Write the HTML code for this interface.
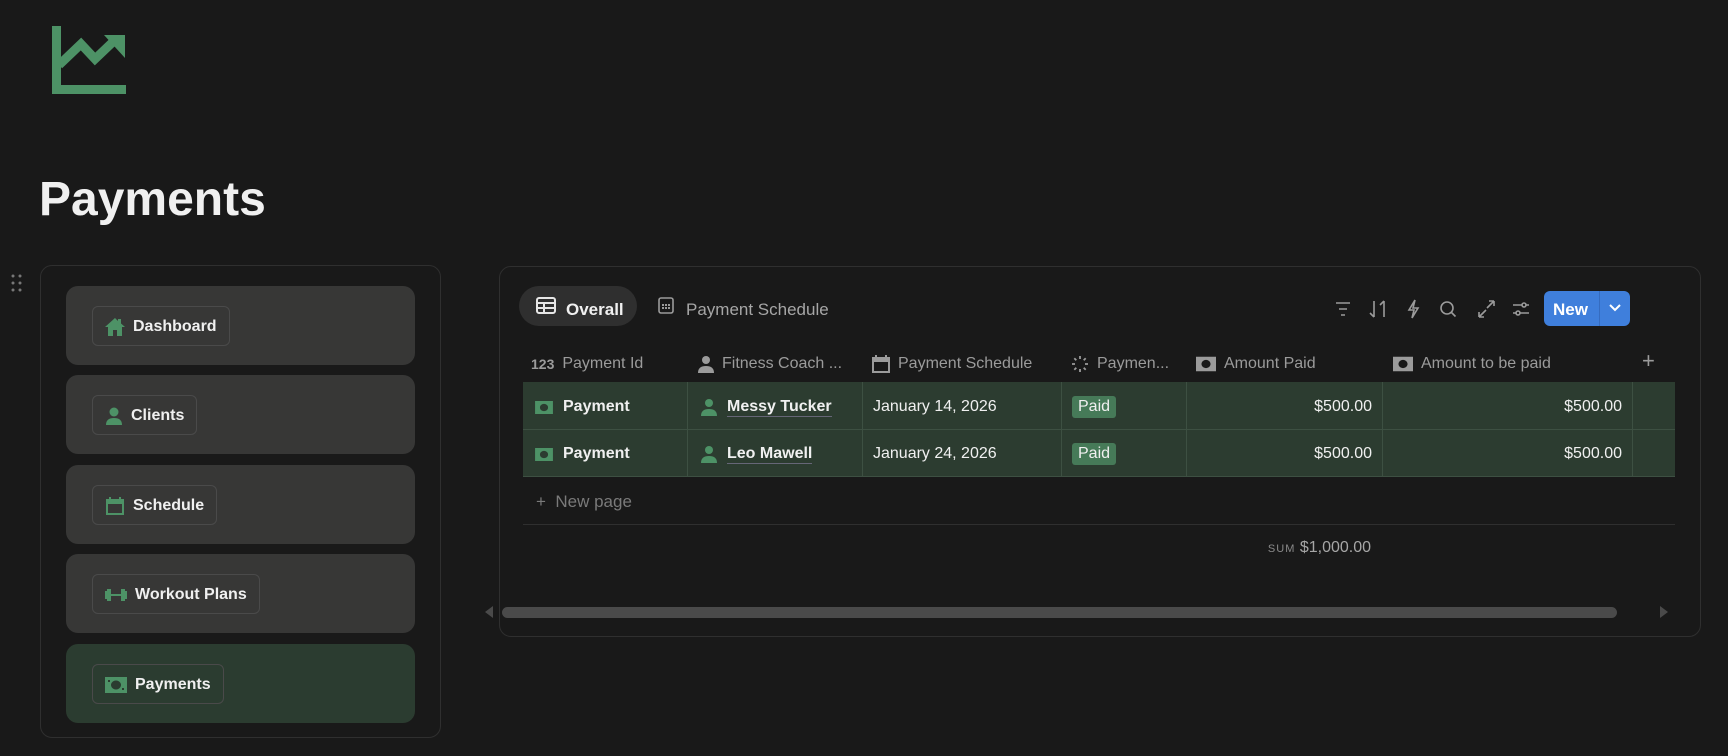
<!DOCTYPE html>
<html><head><meta charset="utf-8"><style>
*{box-sizing:border-box;margin:0;padding:0}
body{width:1728px;height:756px;background:#191919;font-family:"Liberation Sans",sans-serif;color:#d4d4d4;position:relative;overflow:hidden}
.abs{position:absolute}
.card{position:absolute;left:66px;width:349px;height:79px;background:#373736;border-radius:12px}
.pill{position:absolute;left:26px;top:20px;height:40px;border:1px solid #4a4a4a;border-radius:6px;display:flex;align-items:center;padding:2px 12px 0 12px;font-weight:bold;font-size:16px;color:#f0f0f0;gap:8px}
.hd{position:absolute;top:351px;height:26px;display:flex;align-items:center;gap:8px;font-size:16px;color:#9b9b9b}
.cell{position:absolute;height:47px;padding-top:3px;display:flex;align-items:center;font-size:16px;color:#f0f0f0}
.vl{position:absolute;top:382px;height:95px;width:1px;background:#3d5042}
.tag{background:#467a58;color:#f0f0f0;border-radius:3px;padding:2px 6px;font-size:16px}
</style></head><body>
<svg class="abs" style="left:52px;top:26px" width="74" height="68" viewBox="0 0 74 68"><g fill="#4d9266"><rect x="0" y="0" width="9" height="68"/><rect x="0" y="59" width="74" height="9"/><polygon points="52,9 73,9 73,32"/></g><path d="M7 39L29 18L43 33L64 13" stroke="#4d9266" stroke-width="9" fill="none"/></svg>
<div class="abs" style="left:39px;top:172px;font-size:48px;font-weight:bold;color:#f0f0f0">Payments</div>
<svg class="abs" style="left:11px;top:274px" width="12" height="20"><g fill="#777"><circle cx="2" cy="2" r="1.5"/><circle cx="9" cy="2" r="1.5"/><circle cx="2" cy="9" r="1.5"/><circle cx="9" cy="9" r="1.5"/><circle cx="2" cy="16" r="1.5"/><circle cx="9" cy="16" r="1.5"/></g></svg>
<div class="abs" style="left:40px;top:265px;width:401px;height:473px;border:1px solid #2f2f2f;border-radius:12px"></div>
<div class="card" style="top:286px"><div class="pill"><svg width="20" height="18" viewBox="0 0 20 18"><path fill="#4d9266" d="M10 0L0 9h3v9h5v-6h4v6h5V9h3L16 5.5V1h-3v2z"/></svg>Dashboard</div></div>
<div class="card" style="top:375px"><div class="pill"><svg width="18" height="18" viewBox="0 0 18 18"><g fill="#4d9266"><circle cx="9" cy="5" r="4.5"/><path d="M1 18c0-5 3-7 8-7s8 2 8 7z"/></g></svg>Clients</div></div>
<div class="card" style="top:465px"><div class="pill"><svg width="20" height="18" viewBox="0 0 20 18"><path fill="#4d9266" d="M4 0h2v2h8V0h2v2h3v16H1V2h3zM3 7v9h14V7z"/></svg>Schedule</div></div>
<div class="card" style="top:554px"><div class="pill"><svg width="22" height="14" viewBox="0 0 22 14"><path fill="#4d9266" d="M0 3h2V1h4v5h10V1h4v2h2v8h-2v2h-4V8H6v5H2v-2H0z"/></svg>Workout Plans</div></div>
<div class="card" style="top:644px;background:#2b3c30"><div class="pill"><svg width="22" height="16" viewBox="0 0 22 16"><path fill="#4d9266" fill-rule="evenodd" d="M0 0h22v16H0zM11 3.5a5 4.5 0 1 0 .01 0zM3 3v2h2V3zm14 8v2h2v-2z"/></svg>Payments</div></div>

<div class="abs" style="left:499px;top:266px;width:1202px;height:371px;border:1px solid #2f2f2f;border-radius:12px"></div>
<div class="abs" style="left:519px;top:286px;width:118px;height:40px;background:#2f2f2f;border-radius:20px"></div>
<svg class="abs" style="left:536px;top:297px" width="20" height="17" viewBox="0 0 20 17"><rect x="1" y="1" width="18" height="15" rx="2" fill="none" stroke="#e6e6e6" stroke-width="2"/><path d="M1 6h18M1 11h18M8 6v10" stroke="#e6e6e6" stroke-width="2"/></svg>
<div class="abs" style="left:566px;top:300px;font-size:17px;font-weight:bold;color:#f0f0f0">Overall</div>
<svg class="abs" style="left:658px;top:297px" width="16" height="17" viewBox="0 0 16 17"><rect x="1" y="1" width="14" height="15" rx="2" fill="none" stroke="#9b9b9b" stroke-width="1.6"/><g fill="#9b9b9b"><rect x="4" y="7" width="2" height="2"/><rect x="7" y="7" width="2" height="2"/><rect x="10" y="7" width="2" height="2"/><rect x="4" y="10" width="2" height="2"/><rect x="7" y="10" width="2" height="2"/><rect x="10" y="10" width="2" height="2"/></g></svg>
<div class="abs" style="left:686px;top:300px;font-size:17px;color:#a6a6a6">Payment Schedule</div>
<svg class="abs" style="left:1333px;top:298px" width="200" height="22" viewBox="0 0 200 22" fill="none" stroke="#9b9b9b" stroke-width="1.6">
<path d="M3 5h14M6 11h8M8 17h4"/>
<path d="M41 3v16M37 15l4 4M51 19V3M47 7l4-4"/>
<path d="M82 2l-6 10h5l-2 8 6-10h-5z"/>
<circle cx="114" cy="10" r="6"/><path d="M118.5 14.5l4 4"/>
<path d="M146 19l7-7M146 19v-5M146 19h5M161 3l-7 7M161 3v5M161 3h-5"/>
<path d="M180 7h16M180 15h16"/><circle cx="191" cy="7" r="2" fill="#191919"/><circle cx="185" cy="15" r="2" fill="#191919"/>
</svg>
<div class="abs" style="left:1544px;top:291px;width:86px;height:35px;background:#3f7fdc;border-radius:6px"></div>
<div class="abs" style="left:1599px;top:291px;width:1px;height:35px;background:#356cc0"></div>
<div class="abs" style="left:1553px;top:300px;font-size:17px;font-weight:bold;color:#fff">New</div>
<svg class="abs" style="left:1608px;top:303px" width="14" height="10"><path d="M2 2l5 5 5-5" stroke="#fff" stroke-width="2" fill="none"/></svg>

<div class="hd" style="left:531px"><span style="font-weight:bold;font-size:14px;color:#9b9b9b">123</span>Payment Id</div>
<div class="hd" style="left:698px"><svg width="16" height="18" viewBox="0 0 16 18"><g fill="#9b9b9b"><circle cx="8" cy="5" r="4"/><path d="M0 18c0-5 3-7 8-7s8 2 8 7z"/></g></svg>Fitness Coach ...</div>
<div class="hd" style="left:872px"><svg width="18" height="18" viewBox="0 0 18 18"><path fill="#9b9b9b" d="M3 0h2v2h8V0h2v2h3v16H0V2h3zM2 7v9h14V7z"/></svg>Payment Schedule</div>
<div class="hd" style="left:1071px"><svg width="18" height="18" viewBox="0 0 18 18" stroke="#9b9b9b" stroke-width="1.8"><path d="M9 1v3M9 14v3M1 9h3M14 9h3M3.3 3.3l2 2M12.7 12.7l2 2M3.3 14.7l2-2M12.7 5.3l2-2"/></svg>Paymen...</div>
<div class="hd" style="left:1196px"><svg width="20" height="16" viewBox="0 0 22 16"><path fill="#9b9b9b" fill-rule="evenodd" d="M0 0h22v16H0zM11 3.5a5 4.5 0 1 0 .01 0z"/></svg>Amount Paid</div>
<div class="hd" style="left:1393px"><svg width="20" height="16" viewBox="0 0 22 16"><path fill="#9b9b9b" fill-rule="evenodd" d="M0 0h22v16H0zM11 3.5a5 4.5 0 1 0 .01 0z"/></svg>Amount to be paid</div>
<div class="abs" style="left:1642px;top:348px;font-size:22px;color:#9b9b9b">+</div>

<div class="abs" style="left:523px;top:382px;width:1152px;height:95px;background:#2c3c30"></div>
<div class="abs" style="left:523px;top:429px;width:1152px;height:1px;background:#3d5042"></div>
<div class="abs" style="left:523px;top:476px;width:1152px;height:1px;background:#3d5042"></div>
<div class="vl" style="left:687px"></div><div class="vl" style="left:862px"></div><div class="vl" style="left:1061px"></div><div class="vl" style="left:1186px"></div><div class="vl" style="left:1382px"></div><div class="vl" style="left:1632px"></div>

<div class="cell" style="left:535px;top:382px;font-weight:bold;gap:10px"><svg width="18" height="13" viewBox="0 0 22 16"><path fill="#4d9266" fill-rule="evenodd" d="M0 0h22v16H0zM11 3.5a5 4.5 0 1 0 .01 0z"/></svg>Payment</div>
<div class="cell" style="left:535px;top:429px;font-weight:bold;gap:10px"><svg width="18" height="13" viewBox="0 0 22 16"><path fill="#4d9266" fill-rule="evenodd" d="M0 0h22v16H0zM11 3.5a5 4.5 0 1 0 .01 0z"/></svg>Payment</div>
<div class="cell" style="left:701px;top:382px;font-weight:bold;gap:10px"><svg width="16" height="18" viewBox="0 0 16 18"><g fill="#4d9266"><circle cx="8" cy="5" r="4"/><path d="M0 18c0-5 3-7 8-7s8 2 8 7z"/></g></svg><span style="border-bottom:1px solid #667">Messy Tucker</span></div>
<div class="cell" style="left:701px;top:429px;font-weight:bold;gap:10px"><svg width="16" height="18" viewBox="0 0 16 18"><g fill="#4d9266"><circle cx="8" cy="5" r="4"/><path d="M0 18c0-5 3-7 8-7s8 2 8 7z"/></g></svg><span style="border-bottom:1px solid #667">Leo Mawell</span></div>
<div class="cell" style="left:873px;top:382px">January 14, 2026</div>
<div class="cell" style="left:873px;top:429px">January 24, 2026</div>
<div class="cell" style="left:1072px;top:382px"><span class="tag">Paid</span></div>
<div class="cell" style="left:1072px;top:429px"><span class="tag">Paid</span></div>
<div class="cell" style="left:1186px;width:186px;top:382px;justify-content:flex-end">$500.00</div>
<div class="cell" style="left:1186px;width:186px;top:429px;justify-content:flex-end">$500.00</div>
<div class="cell" style="left:1382px;width:240px;top:382px;justify-content:flex-end">$500.00</div>
<div class="cell" style="left:1382px;width:240px;top:429px;justify-content:flex-end">$500.00</div>

<div class="abs" style="left:536px;top:492px;font-size:17px;color:#7a7a7a">+&nbsp;&nbsp;New page</div>
<div class="abs" style="left:523px;top:524px;width:1152px;height:1px;background:#2f2f2f"></div>
<div class="abs" style="left:1100px;top:539px;width:271px;text-align:right;font-size:16px;color:#a6a6a6"><span style="font-size:11px;letter-spacing:1px;color:#8a8a8a">SUM</span> $1,000.00</div>

<div class="abs" style="left:502px;top:607px;width:1115px;height:11px;background:#4a4a4a;border-radius:6px"></div>
<svg class="abs" style="left:484px;top:606px" width="10" height="12"><path d="M9 0v12L1 6z" fill="#4a4a4a"/></svg>
<svg class="abs" style="left:1659px;top:606px" width="10" height="12"><path d="M1 0v12l8-6z" fill="#4a4a4a"/></svg>
</body></html>
